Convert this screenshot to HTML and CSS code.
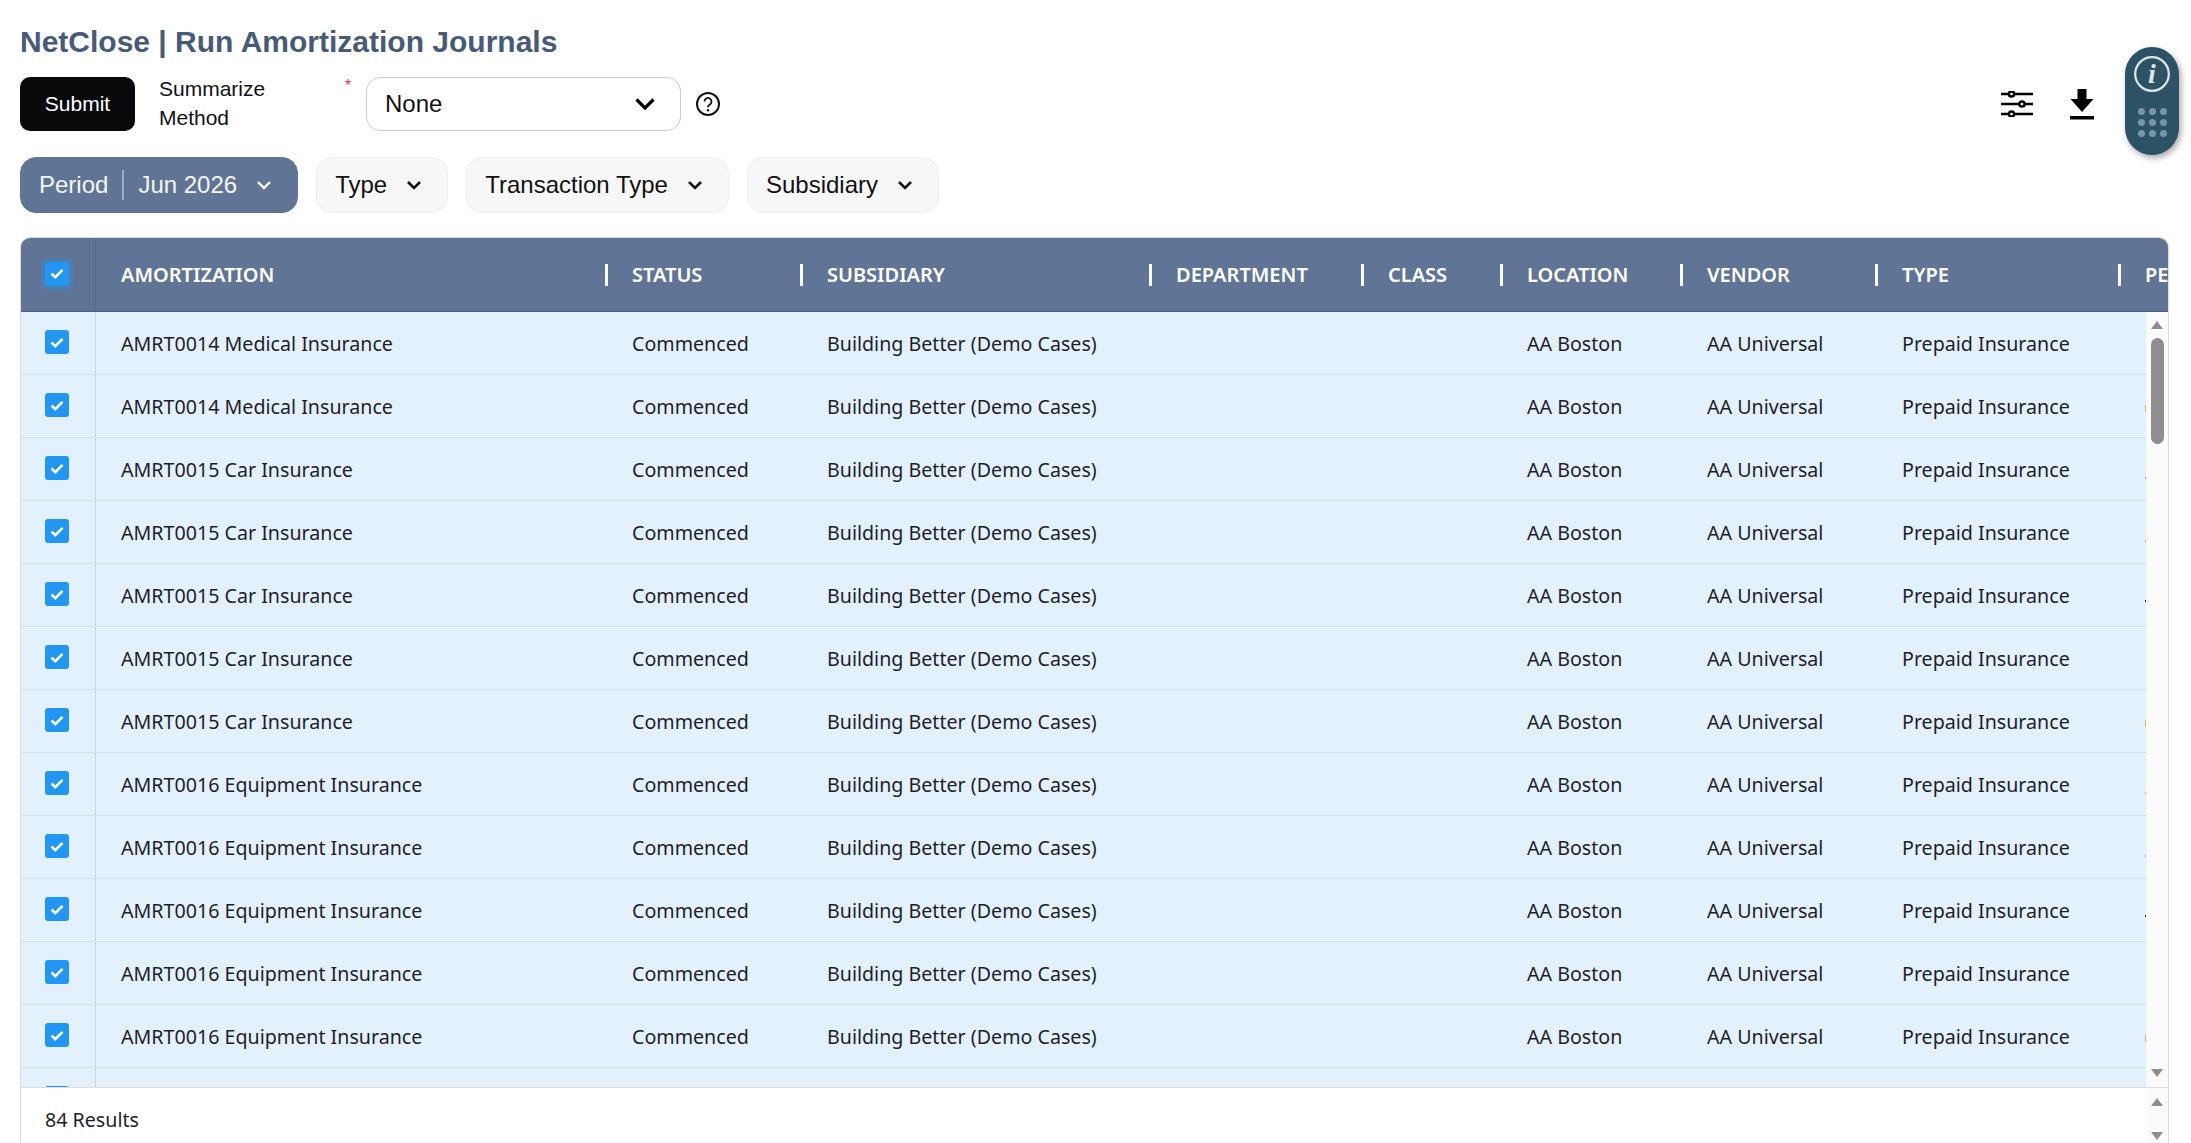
FILE: index.html
```html
<!DOCTYPE html>
<html>
	<head>
		<meta charset="utf-8">
		<title>NetClose | Run Amortization Journals</title>
		<link rel="stylesheet" href="styles.css">
	</head>
	<body>
		<h1 class="page-title">NetClose | Run Amortization Journals</h1>

		<div class="action-bar">
			<button class="submit-btn">Submit</button>
			<div class="field-label">Summarize Method</div>
			<span class="required">*</span>
			<div class="select-box">
				<span>None</span>
				<svg class="select-chevron" width="22" height="14" viewBox="0 0 22 14"><path d="M2.500 2.500 11 11l8.500-8.500" fill="none" stroke="#000" stroke-width="3.200"/></svg>
			</div>
			<svg class="help-icon" width="24" height="24" viewBox="0 0 24 24"><circle cx="12" cy="12" r="11" fill="none" stroke="#111" stroke-width="2"/><path d="M8.500 9.500a3.500 3.500 0 1 1 5.300 3c-1.200.8-1.800 1.400-1.800 2.800" fill="none" stroke="#111" stroke-width="1.800"/><circle cx="12" cy="18.300" r="1.200" fill="#111"/></svg>
			<div class="action-icons">
				<svg width="32" height="26" viewBox="0 0 32 26"><g fill="none" stroke="#000" stroke-width="2.500"><path d="M0 3h32M0 13h32M0 23h32"/><circle cx="10.500" cy="3" r="2.600" fill="#fff"/><circle cx="21" cy="13" r="2.600" fill="#fff"/><circle cx="10.500" cy="23" r="2.600" fill="#fff"/></g></svg>
				<svg width="24" height="31" viewBox="0 0 24 31"><path d="M7.500 0h9v10h7L12 23 .5 10h7z" fill="#000"/><rect y="27" width="24" height="3.500" fill="#000"/></svg>
			</div>
		</div>

		<div class="filter-bar">
			<div class="pill pill-active">
				<span>Period</span><span class="pill-divider"></span><span>Jun 2026</span>
				<svg class="pill-chevron" width="16" height="10" viewBox="0 0 16 10"><path d="M2 2l6 6 6-6" fill="none" stroke="#fff" stroke-width="2.400"/></svg>
			</div>
			<div class="pill">
				<span>Type</span>
				<svg class="pill-chevron" width="16" height="10" viewBox="0 0 16 10"><path d="M2 2l6 6 6-6" fill="none" stroke="#111" stroke-width="2.600"/></svg>
			</div>
			<div class="pill">
				<span>Transaction Type</span>
				<svg class="pill-chevron" width="16" height="10" viewBox="0 0 16 10"><path d="M2 2l6 6 6-6" fill="none" stroke="#111" stroke-width="2.600"/></svg>
			</div>
			<div class="pill">
				<span>Subsidiary</span>
				<svg class="pill-chevron" width="16" height="10" viewBox="0 0 16 10"><path d="M2 2l6 6 6-6" fill="none" stroke="#111" stroke-width="2.600"/></svg>
			</div>
		</div>

		<div class="grid-panel">
			<div class="grid-row grid-head">
				<div class="check-cell"><span class="checkbox checkbox-focus"><svg width="14" height="11" viewBox="0 0 14 11"><path d="M1.500 5.500 5.300 9.200 12.500 1.800" fill="none" stroke="#fff" stroke-width="2.600"/></svg></span></div>
				<div class="head-cell">AMORTIZATION</div>
				<div class="head-cell"><span class="sep"></span>STATUS</div>
				<div class="head-cell"><span class="sep"></span>SUBSIDIARY</div>
				<div class="head-cell"><span class="sep"></span>DEPARTMENT</div>
				<div class="head-cell"><span class="sep"></span>CLASS</div>
				<div class="head-cell"><span class="sep"></span>LOCATION</div>
				<div class="head-cell"><span class="sep"></span>VENDOR</div>
				<div class="head-cell"><span class="sep"></span>TYPE</div>
				<div class="head-cell"><span class="sep"></span>PERIOD</div>
			</div>

			<div class="grid-main">
				<div class="grid-body" id="grid-body"></div>
				<div class="scrollbar">
					<span class="arrow-up"></span>
					<span class="scroll-thumb"></span>
					<span class="scroll-space"></span>
					<span class="arrow-down"></span>
				</div>
			</div>

			<div class="grid-footer">
				<div class="results">84 Results</div>
				<div class="scrollbar footer-scroll">
					<span class="arrow-up"></span>
					<span class="arrow-down"></span>
				</div>
			</div>
		</div>

		<div class="float-widget">
			<svg width="36" height="36" viewBox="0 0 36 36"><circle cx="18" cy="18" r="16.800" fill="none" stroke="#dfe6ea" stroke-width="2.200"/><text x="18" y="27" text-anchor="middle" class="info-i">i</text></svg>
			<div class="dot-grid">
				<span></span><span></span><span></span>
				<span></span><span></span><span></span>
				<span></span><span></span><span></span>
			</div>
		</div>

		<script src="rows.js"></script>
	</body>
</html>
```

FILE: rows.js
```js
const row_names = [
	"AMRT0014 Medical Insurance",
	"AMRT0014 Medical Insurance",
	"AMRT0015 Car Insurance",
	"AMRT0015 Car Insurance",
	"AMRT0015 Car Insurance",
	"AMRT0015 Car Insurance",
	"AMRT0015 Car Insurance",
	"AMRT0016 Equipment Insurance",
	"AMRT0016 Equipment Insurance",
	"AMRT0016 Equipment Insurance",
	"AMRT0016 Equipment Insurance",
	"AMRT0016 Equipment Insurance",
	"AMRT0016 Equipment Insurance",
];

// what shows of the clipped last column, by row
const specks = ["", "speck-tall", "speck-low", "speck-low", "speck-dark", "", "speck-tall", "speck-low", "speck-low", "speck-dark", "", "speck-tall", ""];

const check_svg = '<svg width="14" height="11" viewBox="0 0 14 11"><path d="M1.500 5.500 5.300 9.200 12.500 1.800" fill="none" stroke="#fff" stroke-width="2.600"/></svg>';

document.querySelector('#grid-body').innerHTML = row_names.map((name, i) => `
	<div class="grid-row body-row">
		<div class="check-cell"><span class="checkbox">${check_svg}</span></div>
		<div class="cell">${name}</div>
		<div class="cell">Commenced</div>
		<div class="cell">Building Better (Demo Cases)</div>
		<div class="cell"></div>
		<div class="cell"></div>
		<div class="cell">AA Boston</div>
		<div class="cell">AA Universal</div>
		<div class="cell">Prepaid Insurance</div>
		<div class="cell">${specks[i] ? `<span class="speck ${specks[i]}"></span>` : ""}</div>
	</div>`).join("");
```

FILE: styles.css
```css
html, body {
	height: 100%;
	overflow: hidden;
}

body {
	margin: 0;
	padding: 0 22px 0 20px;
	box-sizing: border-box;
	background: #fff;
	color: #111;
	font-family: "Liberation Sans", Arial, sans-serif;
}

.page-title {
	margin: 0;
	padding-top: 24px;
	height: 77px;
	box-sizing: border-box;
	font-size: 30px;
	line-height: 36px;
	font-weight: bold;
	color: #475a78;
}

.action-bar {
	display: flex;
	align-items: center;
	height: 54px;
}

.submit-btn {
	width: 115px;
	height: 54px;
	border: none;
	border-radius: 10px;
	background: #09090b;
	color: #fff;
	font-family: inherit;
	font-size: 21px;
}

.field-label {
	width: 120px;
	margin-left: 24px;
	margin-bottom: 2px;
	font-size: 21px;
	line-height: 29px;
}

.required {
	width: 21px;
	margin-left: 66px;
	align-self: flex-start;
	padding-top: 1px;
	color: #e53935;
	font-size: 16px;
	line-height: 16px;
}

.select-box {
	display: flex;
	align-items: center;
	justify-content: space-between;
	width: 271px;
	height: 52px;
	padding: 0 24px 0 18px;
	border: 1px solid #ccc;
	border-radius: 14px;
	font-size: 24px;
}

.help-icon {
	margin-left: 15px;
}

.action-icons {
	display: flex;
	align-items: center;
	gap: 37px;
	margin-left: auto;
	margin-right: 75px;
}

.filter-bar {
	display: flex;
	gap: 18px;
	margin-top: 26px;
}

.pill {
	display: flex;
	align-items: center;
	height: 54px;
	padding: 0 25px 0 18px;
	border: 1px solid #efefef;
	border-radius: 16px;
	background: #f7f7f7;
	font-size: 24px;
}

.pill-chevron {
	margin-left: 19px;
}

.pill-active {
	background: #607596;
	border-color: #607596;
	color: #f4f6f9;
}

.pill-divider {
	width: 2px;
	height: 30px;
	margin: 0 14px;
	background: #9fadc2;
}

.grid-panel {
	width: 2147px;
	margin-top: 24px;
	border: 1px solid #dcdcdc;
	border-bottom: none;
	border-radius: 10px 10px 0 0;
	overflow: hidden;
}

.grid-row {
	display: grid;
	grid-template-columns: 75px 511px 195px 349px 212px 139px 180px 195px 243px 200px;
}

.grid-head {
	height: 74px;
	background: #607596;
	border-bottom: 1px solid #4d6180;
	box-sizing: border-box;
	color: #fff;
	font-family: "Noto Sans", sans-serif;
	font-weight: 600;
	font-size: 20px;
	overflow: hidden;
}

.head-cell {
	display: flex;
	align-items: center;
	padding-left: 25px;
	white-space: nowrap;
}

.sep {
	flex: none;
	width: 3px;
	height: 22px;
	margin-left: -27px;
	margin-right: 24px;
	background: #fff;
}

.check-cell {
	display: flex;
	align-items: center;
	justify-content: center;
	padding: 0 3px 2px 0;
	border-right: 1px solid #c9d6e3;
}

.grid-head .check-cell {
	border-right-color: #53688a;
}

.checkbox {
	display: flex;
	align-items: center;
	justify-content: center;
	width: 24px;
	height: 24px;
	border-radius: 3px;
	background: #2196f3;
}

.checkbox-focus {
	box-shadow: 0 0 0 4px rgba(33, 150, 243, 0.3);
}

.grid-main {
	display: flex;
	height: 775px;
}

.grid-body {
	width: 2125px;
	overflow: hidden;
	background: #e3f1fc;
}

.body-row {
	height: 63px;
	border-bottom: 1px solid #d9dfe5;
	box-sizing: border-box;
	font-family: "Noto Sans", sans-serif;
	font-size: 19.650px;
	color: #1e1e2a;
}

.cell {
	display: flex;
	align-items: center;
	padding-left: 25px;
	white-space: nowrap;
}

.speck {
	width: 3px;
	background: #e3ad45;
}

.speck-tall {
	height: 7px;
	margin-top: 4px;
}

.speck-low {
	height: 2px;
	margin-top: 17px;
}

.speck-dark {
	height: 2px;
	margin-top: 12px;
	background: #222;
}

.scrollbar {
	display: flex;
	flex-direction: column;
	align-items: center;
	flex: none;
	width: 22px;
	background: #fbfbfb;
}

.arrow-up {
	flex: none;
	margin-top: 9px;
	border: 6px solid transparent;
	border-top: none;
	border-bottom: 8px solid #8e8e8e;
}

.arrow-down {
	flex: none;
	margin-bottom: 10px;
	border: 6px solid transparent;
	border-bottom: none;
	border-top: 8px solid #8e8e8e;
}

.scroll-thumb {
	flex: none;
	width: 13px;
	height: 106px;
	margin-top: 9px;
	border-radius: 7px;
	background: #8e8e8e;
}

.scroll-space {
	flex: 1;
}

.grid-footer {
	display: flex;
	justify-content: space-between;
	height: 56px;
	border-top: 1px solid #dcdcdc;
	box-sizing: border-box;
}

.results {
	padding: 18px 0 0 24px;
	font-family: "Noto Sans", sans-serif;
	font-size: 19.650px;
	line-height: 27px;
	color: #1e1e2a;
}

.footer-scroll {
	justify-content: space-between;
}

.footer-scroll .arrow-up {
	margin-top: 10px;
}

.footer-scroll .arrow-down {
	margin-bottom: 3px;
}

.float-widget {
	position: absolute;
	left: 2125px;
	top: 47px;
	width: 54px;
	height: 108px;
	display: flex;
	flex-direction: column;
	align-items: center;
	box-sizing: border-box;
	padding-top: 9px;
	border-radius: 27px;
	background: #2c5265;
	box-shadow: 2px 3px 6px rgba(0, 0, 0, 0.35);
}

.info-i {
	font-family: "Liberation Serif", serif;
	font-style: italic;
	font-weight: bold;
	font-size: 28px;
	fill: #dfe6ea;
}

.dot-grid {
	display: grid;
	grid-template-columns: repeat(3, 7px);
	gap: 4px;
	margin-top: 16px;
}

.dot-grid span {
	width: 7px;
	height: 7px;
	border-radius: 50%;
	background: #7a95a3;
}
```
